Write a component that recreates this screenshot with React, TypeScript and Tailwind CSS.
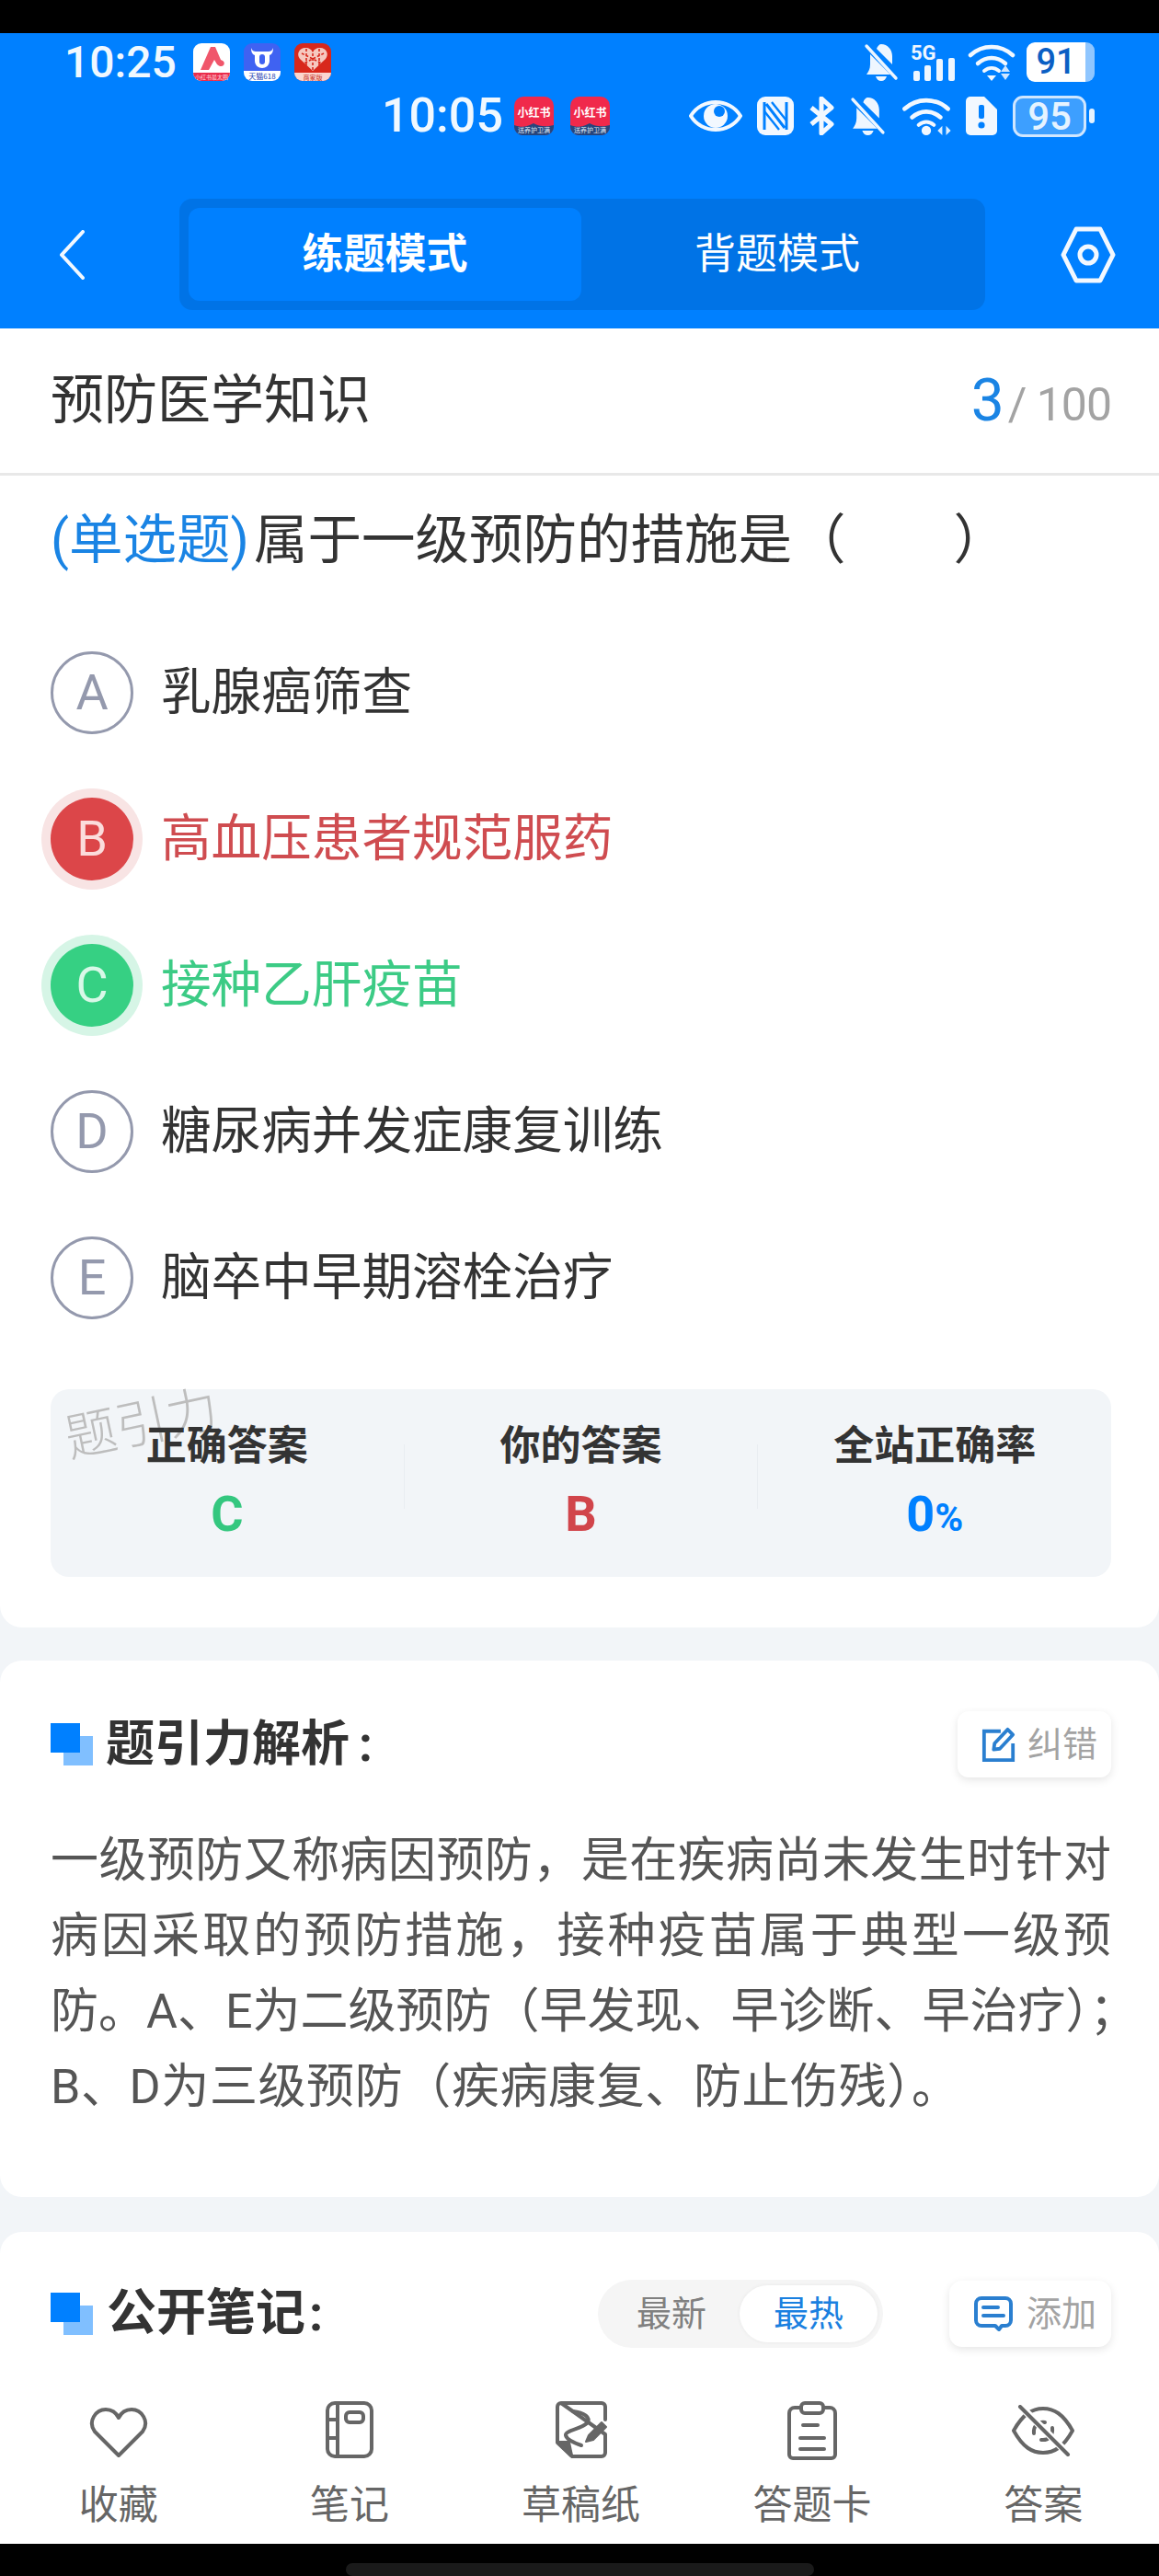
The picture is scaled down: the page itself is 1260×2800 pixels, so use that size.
import { ReactNode } from "react";

const FONT = "font-['Roboto','Noto_Sans_CJK_SC',sans-serif]";

const options = [
  { key: "A", text: "乳腺癌筛查", state: "idle" },
  { key: "B", text: "高血压患者规范服药", state: "wrong" },
  { key: "C", text: "接种乙肝疫苗", state: "right" },
  { key: "D", text: "糖尿病并发症康复训练", state: "idle" },
  { key: "E", text: "脑卒中早期溶栓治疗", state: "idle" },
];

const badgeStyles: Record<string, string> = {
  idle: "border-[3px] border-[#9499ad] text-[#9499ad]",
  wrong: "bg-[#dc4649] text-[#fbdcdc] shadow-[0_0_0_10px_#f8e4e4]",
  right: "bg-[#36d083] text-[#d9f8e8] shadow-[0_0_0_10px_#d6f5e6]",
};

const textStyles: Record<string, string> = {
  idle: "text-[#333333]",
  wrong: "text-[#cf4c50]",
  right: "text-[#3ccb85]",
};

// Small app icons in the status bar
function AppA() {
  return (
    <svg width="40" height="41" viewBox="0 0 40 41">
      <rect width="40" height="41" rx="9" fill="#fff" />
      <path d="M0 32h40v0a9 9 0 0 1-9 9H9a9 9 0 0 1-9-9z" fill="#ea2e4c" />
      <path d="M8 29 19 4h5l6 14c3 1 5 3 3 6-2 2-5 1-7-1l-3-5-6 11z" fill="#f0566b" />
      <text x="20" y="39" textAnchor="middle" fontSize="6" fill="#ffd9df" fontFamily="Noto Sans CJK SC">小红书最太圈</text>
    </svg>
  );
}

function AppBull() {
  return (
    <svg width="40" height="41" viewBox="0 0 40 41">
      <rect width="40" height="41" rx="9" fill="#3f62f2" />
      <path d="M0 30h40v2a9 9 0 0 1-9 9H9a9 9 0 0 1-9-9z" fill="#fff" />
      <path d="M8 5c1 3 3 4 5 4h14c2 0 4-1 5-4 0 4-1 7-4 8v6c0 5-4 8-8 8s-8-3-8-8v-6c-3-1-4-4-4-8z" fill="#fff" />
      <rect x="17" y="12" width="6" height="11" rx="3" fill="#3f62f2" />
      <text x="20" y="39" textAnchor="middle" fontSize="8" fill="#2440b0" fontFamily="Noto Sans CJK SC">天猫618</text>
    </svg>
  );
}

function AppPdd() {
  return (
    <svg width="40" height="41" viewBox="0 0 40 41">
      <rect width="40" height="41" rx="9" fill="#d8281c" />
      <path d="M0 32h40a9 9 0 0 1-9 9H9a9 9 0 0 1-9-9z" fill="#fbd6d0" />
      <path d="M20 30 6 17c-4-5-1-12 6-12 4 0 7 2 8 5 1-3 4-5 8-5 7 0 10 7 6 12z" fill="#f6c9c0" />
      <path d="M20 6v24M8 11l24 12M32 11 8 23M13 6v18M27 6v18" stroke="#d8281c" strokeWidth="1.6" strokeDasharray="3 2" />
      <text x="20" y="39.5" textAnchor="middle" fontSize="7" fill="#c42c20" fontFamily="Noto Sans CJK SC">商家版</text>
    </svg>
  );
}

function AppXhs() {
  return (
    <svg width="43" height="42" viewBox="0 0 43 42">
      <rect width="43" height="42" rx="10" fill="#f0294b" />
      <path d="M0 31c8 3 14 2 21-2 7 4 14 4 22 2v2a9 9 0 0 1-9 9H9a9 9 0 0 1-9-9z" fill="#27457c" />
      <text x="21.5" y="22" textAnchor="middle" fontSize="12" fontWeight="700" fill="#fff" fontFamily="Noto Sans CJK SC">小红书</text>
      <text x="21.5" y="39" textAnchor="middle" fontSize="7" fill="#dfe7f5" fontFamily="Noto Sans CJK SC">送养护卫满</text>
    </svg>
  );
}

function BellOff({ w, h }: { w: number; h: number }) {
  return (
    <svg width={w} height={h} viewBox="0 0 38 41" fill="#eef6ff">
      <path d="M19 1c7 0 12 6 12 13v9l-17-17c1-3 3-5 5-5zM7 12l22 22H3c2-3 4-6 4-11zM13 36h12c-1 3-3 5-6 5s-5-2-6-5z" />
      <path d="M3 3l32 35" stroke="#eef6ff" strokeWidth="3.4" strokeLinecap="round" />
    </svg>
  );
}

function Signal5G() {
  return (
    <div className="relative h-[41px] w-[50px]">
      <span className="absolute left-0 top-0 text-[22px] font-bold leading-none text-[#eef6ff]">5G</span>
      <svg width="50" height="41" viewBox="0 0 50 41" fill="#eef6ff">
        <rect x="3" y="30" width="7" height="11" rx="2" />
        <rect x="15" y="24" width="7" height="17" rx="2" />
        <rect x="28" y="17" width="7" height="24" rx="2" />
        <rect x="41" y="16" width="7" height="25" rx="2" />
      </svg>
    </div>
  );
}

function WifiIcon({ w, h, small }: { w: number; h: number; small: ReactNode }) {
  return (
    <svg width={w} height={h} viewBox="0 0 52 41" fill="none" stroke="#f2f8ff" strokeLinecap="round">
      <path d="M3 13C16 1 36 1 49 13" strokeWidth="4.5" />
      <path d="M11 22c9-8 21-8 30 0" strokeWidth="4.5" />
      {small}
    </svg>
  );
}

function StatusIconsTop() {
  return (
    <div className="flex items-center">
      <BellOff w={38} h={41} />
      <div className="ml-[13px]">
        <Signal5G />
      </div>
      <div className="ml-[12px]">
        <WifiIcon
          w={52}
          h={41}
          small={
            <>
              <path d="M18 30c5-4 11-4 16 0" strokeWidth="4" />
              <path d="M21 35h10l-5 6z" fill="#f2f8ff" stroke="none" />
              <path d="M41 24l5 7H36zM36 33h10l-5 7z" fill="#cfe6ff" stroke="none" />
            </>
          }
        />
      </div>
      <div className="ml-[12px] flex h-[43px] w-[74px] overflow-hidden rounded-[9px] bg-[#8fc6ff]">
        <div className="flex h-full w-[64px] items-center justify-center rounded-l-[9px] bg-white text-[38px] font-medium text-[#0b5fc4]">
          91
        </div>
      </div>
    </div>
  );
}

function StatusIconsBottom() {
  return (
    <div className="flex items-center">
      <svg width="58" height="40" viewBox="0 0 58 40" fill="none">
        <path d="M2 20C14 0 44 0 56 20 44 40 14 40 2 20z" stroke="#f2f8ff" strokeWidth="4" />
        <circle cx="29" cy="20" r="13" fill="#f2f8ff" />
        <circle cx="33" cy="15" r="6" fill="#0080ff" />
      </svg>
      <svg className="ml-[16px]" width="40" height="42" viewBox="0 0 40 42" fill="none">
        <rect width="40" height="42" rx="9" fill="#f2f8ff" />
        <path d="M8 6v30M32 6v30M10 8l20 26" stroke="#0080ff" strokeWidth="3" />
        <path d="M16 6l16 20M8 16l16 20" stroke="#0080ff" strokeWidth="2.4" />
      </svg>
      <svg className="ml-[16px]" width="28" height="42" viewBox="0 0 28 42" fill="none">
        <path d="M3 12l22 18-11 10V2l11 10L3 30" stroke="#f2f8ff" strokeWidth="5" strokeLinejoin="round" />
      </svg>
      <div className="ml-[17px]">
        <BellOff w={39} h={42} />
      </div>
      <div className="ml-[17px]">
        <WifiIcon
          w={54}
          h={42}
          small={
            <>
              <path d="M18 30c5-4 11-4 16 0" strokeWidth="4" />
              <circle cx="26" cy="36" r="5" fill="#f2f8ff" stroke="none" />
              <path d="M38 36l5-5v10zM47 31l5 5-5 5z" fill="#dceeff" stroke="none" />
            </>
          }
        />
      </div>
      <svg className="ml-[16px]" width="34" height="42" viewBox="0 0 34 42">
        <path d="M5 0h15l14 14v23a5 5 0 0 1-5 5H5a5 5 0 0 1-5-5V5a5 5 0 0 1 5-5z" fill="#f2f8ff" />
        <rect x="14" y="9" width="6" height="15" rx="2" fill="#0080ff" />
        <circle cx="17" cy="31" r="3.6" fill="#0080ff" />
      </svg>
      <div className="ml-[17px] flex h-[45px] w-[80px] items-center justify-center rounded-[11px] border-[3px] border-[#cfe6ff] bg-[#3d9fff] text-[42px] font-medium text-[#e6f3ff]">
        95
      </div>
      <div className="ml-[3px] h-[16px] w-[6px] rounded-full bg-[#e6f3ff]" />
    </div>
  );
}

function Header() {
  return (
    <header className="flex h-[321px] flex-col bg-[#0080ff] text-white">
      <div className="mt-[10px] flex h-[42px] items-center justify-between pl-[70px] pr-[70px]">
        <div className="flex items-center">
          <span className="mt-[2px] text-[48px] font-medium leading-none text-[#f0f8ff]">10:25</span>
          <div className="ml-[18px] flex gap-[15px]">
            <AppA />
            <AppBull />
            <AppPdd />
          </div>
        </div>
        <StatusIconsTop />
      </div>
      <div className="mt-[16px] flex h-[44px] items-center justify-between pl-[415px] pr-[70px]">
        <div className="flex items-center">
          <span className="text-[52px] font-medium leading-none text-[#f0f8ff]">10:05</span>
          <div className="ml-[12px] flex gap-[18px]">
            <AppXhs />
            <AppXhs />
          </div>
        </div>
        <StatusIconsBottom />
      </div>
      <div className="mt-[68px] flex items-center">
        <svg className="ml-[64px]" width="28" height="54" viewBox="0 0 28 54" fill="none">
          <path d="M26 2 3 27l23 25" stroke="#f2f8ff" strokeWidth="4" strokeLinecap="round" strokeLinejoin="round" />
        </svg>
        <div className="ml-[103px] flex h-[121px] w-[876px] rounded-[14px] bg-[#0073e6] p-[10px]">
          <div className="flex w-[427px] items-center justify-center rounded-[12px] bg-[#0080ff] text-[45px] font-bold">
            练题模式
          </div>
          <div className="flex flex-1 items-center justify-center pr-[3px] text-[45px]">背题模式</div>
        </div>
        <svg className="ml-[82px]" width="60" height="64" viewBox="0 0 60 64" fill="none">
          <path d="M17 4h26l14 28-14 28H17L3 32z" stroke="#f2f8ff" strokeWidth="5" strokeLinejoin="round" />
          <circle cx="30" cy="32" r="9" stroke="#f2f8ff" strokeWidth="5" />
        </svg>
      </div>
    </header>
  );
}

function ResultCol({ label, children }: { label: string; children: ReactNode }) {
  return (
    <div className="flex flex-1 flex-col items-center pt-[32px]">
      <div className="relative text-[44px] font-bold leading-[60px] text-[#333333]">{label}</div>
      <div className="mt-[9px] text-[54px] font-bold leading-[70px]">{children}</div>
    </div>
  );
}

function SquareMark() {
  return (
    <div className="relative h-[46px] w-[46px] shrink-0">
      <div className="absolute bottom-0 right-0 h-[32px] w-[32px] bg-[#80bfff]" />
      <div className="absolute left-0 top-0 h-[32px] w-[32px] bg-[#0080ff]" />
    </div>
  );
}

function Question() {
  return (
    <section className="h-[1412px] rounded-b-[24px] bg-white">
      <div className="flex h-[160px] items-center justify-between border-b-[3px] border-[#e8e8e8] pl-[55px] pr-[52px]">
        <h1 className="text-[58px] font-normal text-[#333333]">预防医学知识</h1>
        <div className="flex items-baseline text-[#a3a3a3]">
          <span className="text-[64px] text-[#1a84e4]">3</span>
          <span className="ml-[4px] text-[50px] tracking-[-1px]">/ 100</span>
        </div>
      </div>
      <p className="whitespace-pre pl-[55px] pt-[30px] text-[58.5px] leading-[80px] text-[#333333]">
        <span className="mr-[5px] text-[#1a84e4]">(单选题)</span>属于一级预防的措施是（{"\u3000\u3000"}）
      </p>
      <ul className="mt-[46px]">
        {options.map((o) => (
          <li key={o.key} className="flex h-[159px] items-center pl-[55px]">
            <span className={`flex h-[90px] w-[90px] items-center justify-center rounded-full text-[54px] ${badgeStyles[o.state]}`}>
              {o.key}
            </span>
            <span className={`ml-[30px] text-[54.6px] ${textStyles[o.state]}`}>{o.text}</span>
          </li>
        ))}
      </ul>
      <div className="relative ml-[55px] mr-[52px] mt-[42px] flex h-[204px] rounded-[20px] bg-[#f2f5f8]">
        <span className="absolute left-[15px] top-[10px] -rotate-12 text-[56px] font-light leading-none text-[#bdbdbd]">
          题引力
        </span>
        <ResultCol label="正确答案">
          <span className="text-[#34c77f]">C</span>
        </ResultCol>
        <div className="mt-[60px] h-[70px] w-px bg-[#e9edf1]" />
        <ResultCol label="你的答案">
          <span className="text-[#d1454b]">B</span>
        </ResultCol>
        <div className="mt-[60px] h-[70px] w-px bg-[#e9edf1]" />
        <ResultCol label="全站正确率">
          <span className="text-[#0080ff]">
            0<span className="text-[42px]">%</span>
          </span>
        </ResultCol>
      </div>
    </section>
  );
}

const analysisLines = [
  "一级预防又称病因预防，是在疾病尚未发生时针对",
  "病因采取的预防措施，接种疫苗属于典型一级预",
  "防。A、E为二级预防（早发现、早诊断、早治疗）；",
];

function Analysis() {
  return (
    <section className="mt-[36px] rounded-[24px] bg-white pb-[78px] pl-[55px] pr-[52px] pt-[55px]">
      <div className="flex h-[72px] items-center justify-between">
        <div className="flex items-center">
          <SquareMark />
          <h2 className="ml-[14px] text-[53px] font-bold leading-[72px] text-[#333333]">
            题引力解析<span className="ml-[10px]">:</span>
          </h2>
        </div>
        <div className="flex h-[72px] w-[167px] items-center rounded-[12px] bg-white pl-[26px] text-[38px] text-[#a3a3a3] shadow-[0_3px_10px_rgba(0,0,0,0.1)]">
          <svg width="38" height="38" viewBox="0 0 40 40" fill="none" stroke="#2a7fd0" strokeWidth="4">
            <path d="M22 5H3v33h33V19" />
            <path d="M14 26l1-7L30 3l6 6-15 16z" strokeLinejoin="round" />
          </svg>
          <span className="ml-[12px]">纠错</span>
        </div>
      </div>
      <div className="mt-[50px] text-[52px] leading-[82px] text-[#555555]">
        {analysisLines.map((line) => (
          <p key={line} className="whitespace-nowrap text-justify [text-align-last:justify]">
            {line}
          </p>
        ))}
        <p className="tracking-[0.6px]">B、D为三级预防（疾病康复、防止伤残）。</p>
      </div>
    </section>
  );
}

function Notes() {
  return (
    <section className="mt-[38px] h-[400px] rounded-t-[24px] bg-white pl-[55px] pr-[52px] pt-[52px]">
      <div className="flex h-[74px] items-center">
        <SquareMark />
        <h2 className="ml-[15px] text-[54px] font-bold leading-[74px] text-[#333333]">
          公开笔记<span className="ml-[4px]">:</span>
        </h2>
        <div className="ml-auto flex h-[74px] w-[310px] items-center rounded-full bg-[#f5f5f5] p-[6px] text-[38px]">
          <span className="flex-1 text-center text-[#808080]">最新</span>
          <span className="flex h-[62px] w-[150px] items-center justify-center rounded-full bg-white text-[#1a80e0] shadow-[0_0_4px_rgba(0,0,0,0.06)]">
            最热
          </span>
        </div>
        <div className="ml-[72px] flex h-[72px] w-[176px] items-center rounded-[14px] bg-white pl-[27px] text-[38px] text-[#a3a3a3] shadow-[0_3px_10px_rgba(0,0,0,0.1)]">
          <svg width="42" height="38" viewBox="0 0 42 38" fill="none" stroke="#2a7fd0" strokeWidth="4">
            <path d="M8 2h26a6 6 0 0 1 6 6v18a6 6 0 0 1-6 6h-4l-3 4-4-4H8a6 6 0 0 1-6-6V8a6 6 0 0 1 6-6z" strokeLinejoin="round" />
            <path d="M10 12h16M10 21h22" strokeLinecap="round" />
          </svg>
          <span className="ml-[15px]">添加</span>
        </div>
      </div>
    </section>
  );
}

const iconProps = {
  fill: "none",
  stroke: "#666666",
  strokeWidth: 4,
  strokeLinecap: "round" as const,
  strokeLinejoin: "round" as const,
};

const toolbar = [
  {
    label: "收藏",
    icon: (
      <svg className="mt-[6px]" width="64" height="56" viewBox="0 0 64 56" {...iconProps}>
        <path d="M32 53 6 27C-2 16 7 3 18 3c6 0 11 3 14 9 3-6 8-9 14-9 11 0 20 13 12 24z" />
      </svg>
    ),
  },
  {
    label: "笔记",
    icon: (
      <svg width="52" height="62" viewBox="0 0 52 62" {...iconProps}>
        <rect x="2" y="2" width="48" height="58" rx="8" />
        <path d="M13 2v58M2 20h11M2 40h11" />
        <rect x="22" y="12" width="19" height="11" rx="4" />
      </svg>
    ),
  },
  {
    label: "草稿纸",
    icon: (
      <svg width="56" height="63" viewBox="0 0 56 63" {...iconProps}>
        <path d="M6 2h44a4 4 0 0 1 4 4v14M54 36v20a4 4 0 0 1-4 4H18L2 45V6a4 4 0 0 1 4-4z" />
        <path d="M3 45h11l3 14z" fill="#666666" />
        <path d="M19 11c11 1 21 7 15 13S10 32 11 37s11 9 17 11" />
        <path d="M33 44l3-7 14-14 5 5-14 14z" fill="#666666" strokeWidth="2" />
      </svg>
    ),
  },
  {
    label: "答题卡",
    icon: (
      <svg width="54" height="64" viewBox="0 0 54 64" {...iconProps}>
        <path d="M15 7H8a6 6 0 0 0-6 6v45a4 4 0 0 0 4 4h42a4 4 0 0 0 4-4V13a6 6 0 0 0-6-6h-7" />
        <rect x="15" y="2" width="24" height="11" rx="4" />
        <path d="M17 26h16M14 40h26M14 52h26" />
      </svg>
    ),
  },
  {
    label: "答案",
    icon: (
      <svg className="mt-[4px]" width="68" height="56" viewBox="0 0 68 56" {...iconProps}>
        <path d="M2 28C12 10 22 4 34 4s22 6 32 24C56 46 46 52 34 52S12 46 2 28z" />
        <path d="M24 31c-1-8 5-13 12-12M44 25c1 8-4 14-12 13" />
        <path d="M8 0l54 54" stroke="#ffffff" strokeWidth="8" />
        <path d="M9 2l52 52" stroke="#666666" />
      </svg>
    ),
  },
];

export default function App() {
  return (
    <div className={`flex h-[2800px] w-[1260px] flex-col overflow-hidden bg-[#f2f5f8] ${FONT}`}>
      <div className="h-[36px] shrink-0 bg-black" />
      <Header />
      <main className="min-h-0 flex-1 overflow-hidden">
        <Question />
        <Analysis />
        <Notes />
      </main>
      <nav className="flex h-[165px] shrink-0 bg-white pl-[3px] pt-[10px]">
        {toolbar.map((item) => (
          <div key={item.label} className="flex flex-1 flex-col items-center">
            <div className="flex h-[66px] items-start">{item.icon}</div>
            <span className="mt-[17px] text-[43px] leading-[60px] text-[#666666]">{item.label}</span>
          </div>
        ))}
      </nav>
      <div className="flex h-[35px] shrink-0 justify-center bg-black pt-[21px]">
        <div className="h-[14px] w-[509px] rounded-full bg-[#1a1a1a]" />
      </div>
    </div>
  );
}
